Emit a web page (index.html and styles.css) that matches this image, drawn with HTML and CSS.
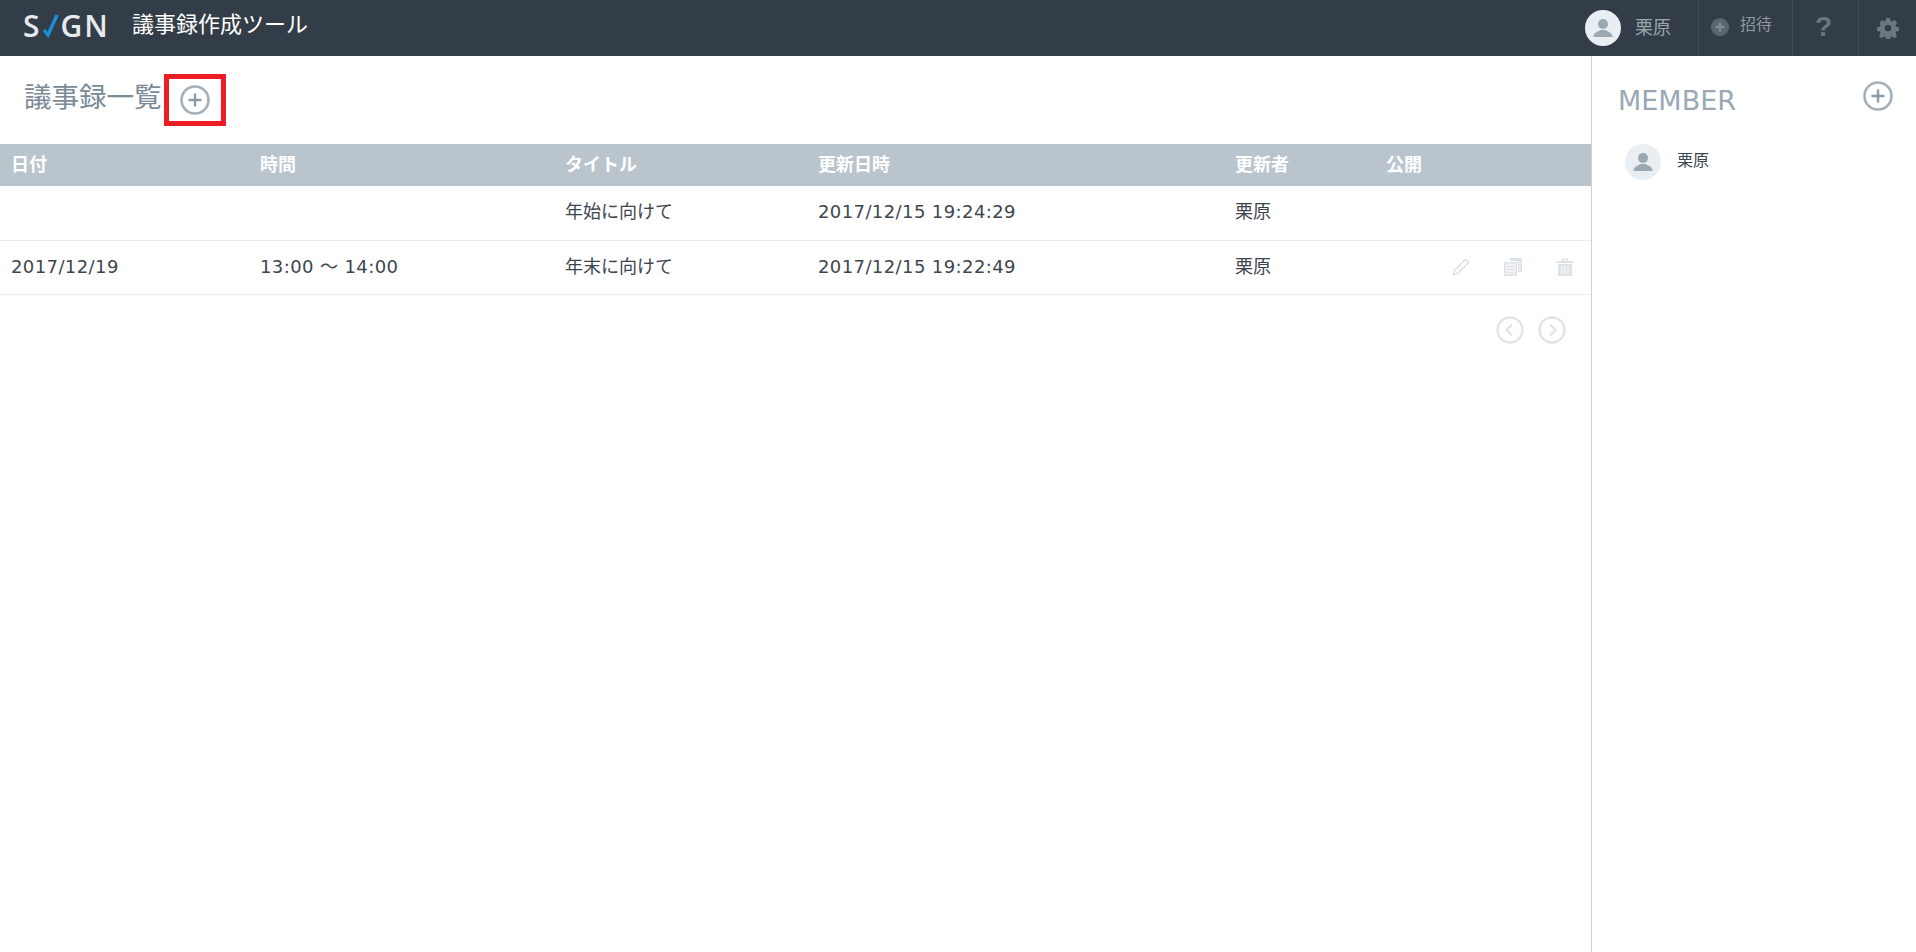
FILE: index.html
```html
<!DOCTYPE html>
<html lang="ja">
<head>
    <meta charset="UTF-8">
    <title>議事録作成ツール</title>
    <link rel="stylesheet" href="styles.css">
</head>
<body>
    <header class="topbar">
        <div class="logo">
            <span>S</span>
            <svg class="logo-check" viewBox="0 0 16 24" width="16" height="24"><path d="M1 16 L5 21 L14 1" fill="none" stroke="#1c8fd6" stroke-width="3.4"/></svg>
            <span>GN</span>
        </div>
        <div class="app-name">議事録作成ツール</div>
        <div class="topbar-right">
            <div class="nav-item nav-user">
                <span class="avatar">
                    <svg viewBox="0 0 24 24" width="24" height="24"><circle cx="12" cy="8" r="5"/><path d="M2.5 21 C2.5 16 8 15.5 9.5 14 L14.5 14 C16 15.500 21.500 16 21.500 21 Z"/></svg>
                </span>
                <span>栗原</span>
            </div>
            <div class="nav-item nav-invite">
                <svg viewBox="0 0 18 18" width="18" height="18"><circle cx="9" cy="9" r="9" fill="#5b6670"/><path d="M9 4.500 V13.500 M4.500 9 H13.500" stroke="#7f8a94" stroke-width="2.600"/></svg>
                <span class="invite-label">招待</span>
            </div>
            <div class="nav-item nav-help">?</div>
            <div class="nav-item nav-gear">
                <svg viewBox="0 0 24 24" width="22" height="22"><path fill="#6a7680" fill-rule="evenodd" d="M10 1h4l.6 3.200 1.900.8 2.700-1.800 2.800 2.800-1.800 2.700.8 1.900 3 .6v4l-3 .6-.8 1.900 1.800 2.700-2.800 2.800-2.700-1.800-1.900.8-.6 3h-4l-.6-3-1.900-.8-2.700 1.800-2.800-2.800 1.800-2.700-.8-1.900-3-.6v-4l3-.6.8-1.900L2.800 6l2.800-2.800 2.700 1.800 1.100-.8zM12 8.500a3.500 3.500 0 1 0 0 7 3.500 3.500 0 0 0 0-7z"/></svg>
            </div>
        </div>
    </header>

    <div class="page">
        <main class="content">
            <div class="title-row">
                <h1>議事録一覧</h1>
                <div class="add-box">
                    <svg viewBox="0 0 30 30" width="30" height="30"><circle cx="15" cy="15" r="13.500" fill="none" stroke="#a3afb9" stroke-width="2.600"/><path d="M15 8.500 V21.500 M8.500 15 H21.500" stroke="#8e9ba6" stroke-width="2.400"/></svg>
                </div>
            </div>

            <table class="minutes">
                <colgroup>
                    <col class="col-date"><col class="col-time"><col class="col-title"><col class="col-updated"><col class="col-user"><col class="col-public">
                </colgroup>
                <thead>
                    <tr><th>日付</th><th>時間</th><th>タイトル</th><th>更新日時</th><th>更新者</th><th>公開</th></tr>
                </thead>
                <tbody>
                    <tr>
                        <td></td><td></td><td>年始に向けて</td><td class="num">2017/12/15 19:24:29</td><td>栗原</td><td></td>
                    </tr>
                    <tr>
                        <td class="num">2017/12/19</td><td class="num">13:00 ～ 14:00</td><td>年末に向けて</td><td class="num">2017/12/15 19:22:49</td><td>栗原</td>
                        <td>
                            <div class="row-icons">
                                <svg viewBox="0 0 20 20" width="20" height="20"><path d="M2.500 17.500 L3.500 13.500 L14.500 2.500 L17.500 5.500 L6.500 16.500 Z" fill="none" stroke="#dde2e6" stroke-width="1.600"/></svg>
                                <svg viewBox="0 0 20 20" width="20" height="20"><path d="M7 1 H19 V15 H15 V4 H7 Z" fill="#dde2e6"/><path d="M16 6 H18 M16 9 H18 M16 12 H18" stroke="#fff" stroke-width="1"/><rect x="1" y="5" width="13" height="14" fill="#dde2e6"/><rect x="2.500" y="6.500" width="10" height="11" fill="#f1f3f5"/><path d="M4 9.500 H11 M4 12.500 H11 M4 15.500 H11" stroke="#dde2e6" stroke-width="1"/></svg>
                                <svg viewBox="0 0 20 20" width="20" height="20"><path d="M1.500 4 H18.500 V6 H1.500 Z M7 1.500 H13 V4 H11.500 V3 H8.500 V4 H7 Z" fill="#dde2e6"/><path d="M3 7 H17 V19 H3 Z" fill="#dde2e6"/><path d="M7 9 V17 M10 9 V17 M13 9 V17" stroke="#fff" stroke-width="1"/></svg>
                            </div>
                        </td>
                    </tr>
                </tbody>
            </table>

            <div class="pager">
                <svg viewBox="0 0 28 28" width="28" height="28"><circle cx="14" cy="14" r="12.500" fill="none" stroke="#dfe5e9" stroke-width="2.400"/><path d="M16 8.500 L10.500 14 L16 19.500" fill="none" stroke="#dfe5e9" stroke-width="2.400"/></svg>
                <svg viewBox="0 0 28 28" width="28" height="28"><circle cx="14" cy="14" r="12.500" fill="none" stroke="#dfe5e9" stroke-width="2.400"/><path d="M12 8.500 L17.500 14 L12 19.500" fill="none" stroke="#dfe5e9" stroke-width="2.400"/></svg>
            </div>
        </main>

        <aside class="sidebar">
            <div class="member-head">
                <h2>MEMBER</h2>
                <svg viewBox="0 0 30 30" width="30" height="30"><circle cx="15" cy="15" r="13.500" fill="none" stroke="#a3afb9" stroke-width="2.600"/><path d="M15 8.500 V21.500 M8.500 15 H21.500" stroke="#8e9ba6" stroke-width="2.400"/></svg>
            </div>
            <div class="member">
                <span class="avatar">
                    <svg viewBox="0 0 24 24" width="24" height="24"><circle cx="12" cy="8" r="5"/><path d="M2.500 21 C2.500 16 8 15.500 9.500 14 L14.500 14 C16 15.500 21.500 16 21.500 21 Z"/></svg>
                </span>
                <span class="member-name">栗原</span>
            </div>
        </aside>
    </div>
</body>
</html>
```

FILE: styles.css
```css
* {
    box-sizing: border-box;
}
html, body {
    height: 100%;
}
body {
    margin: 0;
    display: flex;
    flex-direction: column;
    overflow: hidden;
    font-family: "DejaVu Sans", "Noto Sans CJK JP", sans-serif;
    font-size: 18px;
    line-height: 26px;
    color: #3d4650;
    background: white;
}

/* top bar */
.topbar {
    height: 56px;
    flex: none;
    display: flex;
    align-items: center;
    background: #333d48;
    color: white;
}
.logo {
    display: flex;
    align-items: center;
    width: 132px;
    padding: 0 0 4px 23px;
    font-family: "Open Sans", sans-serif;
    font-size: 30px;
    font-weight: 600;
    letter-spacing: 2px;
    color: #e6eaed;
}
.logo-check {
    margin: 0 2px 0 1px;
}
.app-name {
    font-size: 22px;
    padding-bottom: 7px;
}
.topbar-right {
    margin-left: auto;
    display: flex;
    height: 100%;
}
.nav-item {
    display: flex;
    align-items: center;
    justify-content: center;
    color: #9aa5ae;
    border-left: 1px solid #414c57;
}
.nav-user {
    width: 140px;
    justify-content: flex-end;
    gap: 14px;
    padding-right: 27px;
    border-left: none;
}
.nav-invite {
    width: 94px;
    gap: 11px;
    padding: 0 8px 2px 0;
    font-size: 16px;
    color: #8e99a3;
}
.invite-label {
    padding-bottom: 4px;
}
.nav-help {
    width: 66px;
    padding: 0 4px 2px 0;
    font-family: "Liberation Sans", sans-serif;
    font-size: 28px;
    font-weight: bold;
    color: #6a7680;
}
.nav-gear {
    width: 58px;
}
.avatar {
    width: 36px;
    height: 36px;
    flex: none;
    border-radius: 50%;
    background: #e9eef2;
    display: flex;
    align-items: center;
    justify-content: center;
}
.avatar svg {
    fill: #9aa8b2;
}

/* main */
.page {
    flex: 1;
    display: flex;
}
.content {
    width: 1591px;
    flex: none;
}
.title-row {
    height: 88px;
    display: flex;
    align-items: center;
    padding-left: 24px;
}
h1 {
    margin: 0 0 7px;
    font-size: 27.5px;
    font-weight: normal;
    color: #7b8a97;
}
.add-box {
    width: 62px;
    height: 52px;
    margin-left: 2px;
    border: 5px solid #ee1c25;
    display: flex;
    align-items: center;
    justify-content: center;
}

.minutes {
    width: 100%;
    table-layout: fixed;
    border-collapse: collapse;
}
.col-date { width: 249px; }
.col-time { width: 305px; }
.col-title { width: 253px; }
.col-updated { width: 417px; }
.col-user { width: 151px; }
.minutes th {
    height: 42px;
    padding: 0 11px 1px;
    background: #bac4cd;
    color: white;
    font-size: 18px;
    text-align: left;
}
.minutes td {
    height: 54px;
    padding: 0 11px 1px;
    border-bottom: 1px solid #e8edf1;
}
.minutes td.num {
    letter-spacing: 0.4px;
}
.row-icons {
    display: flex;
    justify-content: flex-end;
    gap: 32px;
    padding: 1px 5px 0 0;
}
.pager {
    display: flex;
    justify-content: flex-end;
    gap: 14px;
    padding: 21px 25px 0 0;
}

/* member list */
.sidebar {
    flex: 1;
    border-left: 1px solid #c9d4da;
    padding: 25px 23px 0 26px;
}
.member-head {
    display: flex;
    align-items: flex-start;
    justify-content: space-between;
}
h2 {
    margin: 3px 0 0;
    font-size: 27px;
    line-height: 34px;
    font-weight: normal;
    color: #9aa9b5;
}
.member {
    display: flex;
    align-items: center;
    gap: 16px;
    margin-top: 26px;
    padding-left: 7px;
}
.member-name {
    font-size: 16px;
    padding-bottom: 3px;
}
```
